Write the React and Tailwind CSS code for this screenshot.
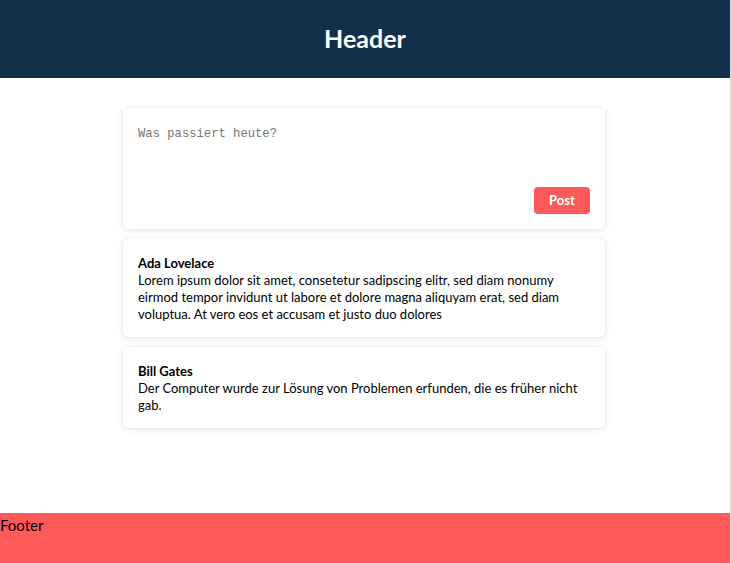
import React, { useState } from "react";

const posts = [
  {
    id: 1,
    author: "Ada Lovelace",
    text: "Lorem ipsum dolor sit amet, consetetur sadipscing elitr, sed diam nonumy eirmod tempor invidunt ut labore et dolore magna aliquyam erat, sed diam voluptua. At vero eos et accusam et justo duo dolores",
  },
  {
    id: 2,
    author: "Bill Gates",
    text: "Der Computer wurde zur Lösung von Problemen erfunden, die es früher nicht gab.",
  },
];

const App = () => {
  const [draft, setDraft] = useState("");

  return (
    <div className="w-[731px] min-h-[563px] flex flex-col border-r border-[#dcdcdc] bg-white font-['Lato','Noto_Sans',sans-serif] text-black">
      <header className="h-[78px] bg-[#13304a] flex items-center justify-center">
        <h1 className="text-[25px] font-bold text-white">Header</h1>
      </header>

      <main className="flex-1 pt-[30px] pb-[30px]">
        <div className="w-[482px] ml-[123px] flex flex-col gap-[10px]">
          {/* Neuer Beitrag */}
          <div className="bg-white rounded-md shadow-[0_1px_6px_rgba(0,0,0,0.12)] p-[15px] flex flex-col">
            <textarea
              value={draft}
              onChange={(e) => setDraft(e.target.value)}
              placeholder="Was passiert heute?"
              className="h-[54px] mb-[10px] resize-none outline-none font-['Liberation_Mono',monospace] text-[12.2px] leading-[16px] placeholder:text-[#757575] pt-[3px]"
            />
            <div className="flex justify-end">
              <button className="w-[56px] h-[27px] rounded bg-[#ff5a5a] text-white font-bold text-[13px]">
                Post
              </button>
            </div>
          </div>

          {posts.map((post) => (
            <div
              key={post.id}
              className="bg-white rounded-md shadow-[0_1px_6px_rgba(0,0,0,0.12)] pt-[16px] pb-[14px] px-[15px] text-[13px] leading-[17px]"
            >
              <div className="font-bold">{post.author}</div>
              <p>{post.text}</p>
            </div>
          ))}
        </div>
      </main>

      <footer className="h-[50px] bg-[#ff5a5a] pt-[2px] text-[15px] leading-[20px]">
        Footer
      </footer>
    </div>
  );
};

export default App;
